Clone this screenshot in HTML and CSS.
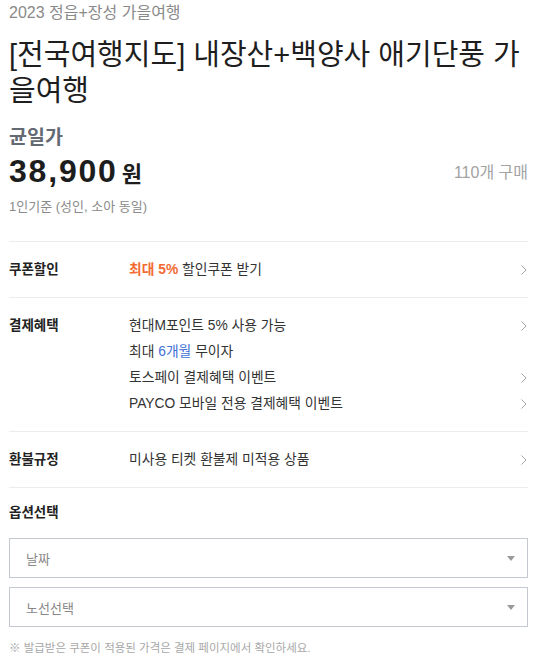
FILE: index.html
```html
<!DOCTYPE html>
<html lang="ko">
<head>
<meta charset="utf-8">
<title>전국여행지도</title>
<link rel="stylesheet" href="styles.css">
</head>
<body>
<div class="page">
  <div class="subtitle">2023 정읍+장성 가을여행</div>
  <h1 class="title">[전국여행지도] 내장산+백양사 애기단풍 가을여행</h1>
  <div class="price-label">균일가</div>
  <div class="price-row">
    <div class="price"><span class="amount">38,900</span><span class="won">원</span></div>
    <div class="sold">110개 구매</div>
  </div>
  <div class="price-note">1인기준 (성인, 소아 동일)</div>

  <div class="info-row">
    <div class="info-label">쿠폰할인</div>
    <div class="info-values">
      <div class="info-line"><span><b class="orange">최대 5%</b> 할인쿠폰 받기</span><svg class="chev" width="6" height="10" viewBox="0 0 6 10"><polyline points="0.5,0.5 5,5 0.5,9.5" fill="none" stroke="#a6a6a6" stroke-width="1"/></svg></div>
    </div>
  </div>
  <div class="info-row">
    <div class="info-label">결제혜택</div>
    <div class="info-values">
      <div class="info-line"><span>현대M포인트 5% 사용 가능</span><svg class="chev" width="6" height="10" viewBox="0 0 6 10"><polyline points="0.5,0.5 5,5 0.5,9.5" fill="none" stroke="#a6a6a6" stroke-width="1"/></svg></div>
      <div class="info-line"><span>최대 <span class="blue">6개월</span> 무이자</span></div>
      <div class="info-line"><span>토스페이 결제혜택 이벤트</span><svg class="chev" width="6" height="10" viewBox="0 0 6 10"><polyline points="0.5,0.5 5,5 0.5,9.5" fill="none" stroke="#a6a6a6" stroke-width="1"/></svg></div>
      <div class="info-line"><span>PAYCO 모바일 전용 결제혜택 이벤트</span><svg class="chev" width="6" height="10" viewBox="0 0 6 10"><polyline points="0.5,0.5 5,5 0.5,9.5" fill="none" stroke="#a6a6a6" stroke-width="1"/></svg></div>
    </div>
  </div>
  <div class="info-row last">
    <div class="info-label">환불규정</div>
    <div class="info-values">
      <div class="info-line"><span>미사용 티켓 환불제 미적용 상품</span><svg class="chev" width="6" height="10" viewBox="0 0 6 10"><polyline points="0.5,0.5 5,5 0.5,9.5" fill="none" stroke="#a6a6a6" stroke-width="1"/></svg></div>
    </div>
  </div>

  <div class="option-title">옵션선택</div>
  <div class="select"><span>날짜</span><span class="caret"></span></div>
  <div class="select"><span>노선선택</span><span class="caret"></span></div>
  <div class="footnote">※ 발급받은 쿠폰이 적용된 가격은 결제 페이지에서 확인하세요.</div>
</div>
</body>
</html>
```

FILE: styles.css
```css
* { box-sizing: border-box; }
html, body { margin: 0; padding: 0; background: #fff; }
body {
  font-family: "Liberation Sans", "Noto Sans CJK KR", sans-serif;
  color: #222;
}
.page { padding: 2px 6px 0 9px; }
.subtitle { font-size: 16px; line-height: 21px; color: #8a8a8a; }
.title {
  margin: 14px 0 0;
  font-size: 29px;
  line-height: 36px;
  font-weight: normal;
  color: #1e1e1e;
}
.price-label {
  margin-top: 16px;
  font-size: 19.5px;
  line-height: 24px;
  font-weight: bold;
  color: #636a74;
}
.price-row {
  margin-top: 2px;
  display: flex;
  align-items: center;
  justify-content: space-between;
  height: 40px;
}
.price { display: flex; align-items: baseline; }
.amount {
  font-size: 32px;
  font-weight: bold;
  letter-spacing: 1.8px;
  color: #1d1d1d;
}
.won { font-size: 22px; font-weight: bold; margin-left: 4px; color: #1d1d1d; }
.sold { font-size: 16px; color: #a3a3a3; }
.price-note {
  margin-top: 7px;
  font-size: 13px;
  line-height: 18px;
  color: #8a8a8a;
  margin-bottom: 25px;
}
.info-row {
  display: flex;
  border-top: 1px solid #ececec;
  padding: 15px 0 14px;
  font-size: 13.8px;
  line-height: 26px;
}
.info-row.last { border-bottom: 1px solid #ececec; }
.info-label { width: 120px; flex: none; font-weight: bold; color: #222; font-size: 13.5px; }
.info-values { flex: 1; color: #333; }
.info-line { display: flex; align-items: center; justify-content: space-between; }
.chev { flex: none; margin-right: 1px; }
.orange { color: #f36b32; }
.blue { color: #3f6fd6; }
.option-title {
  margin-top: 15px;
  font-size: 13.5px;
  line-height: 20px;
  font-weight: bold;
  color: #222;
}
.select {
  margin-top: 15px;
  height: 40px;
  border: 1px solid #c3c9cf;
  display: flex;
  align-items: center;
  justify-content: space-between;
  padding: 0 12px 0 16px;
  font-size: 13px;
  color: #888;
}
.select + .select { margin-top: 9px; }
.caret {
  width: 0; height: 0;
  border-left: 4px solid transparent;
  border-right: 4px solid transparent;
  border-top: 5px solid #9a9a9a;
}
.footnote {
  margin-top: 13px;
  font-size: 11.5px;
  line-height: 16px;
  color: #a8a8a8;
}
```
